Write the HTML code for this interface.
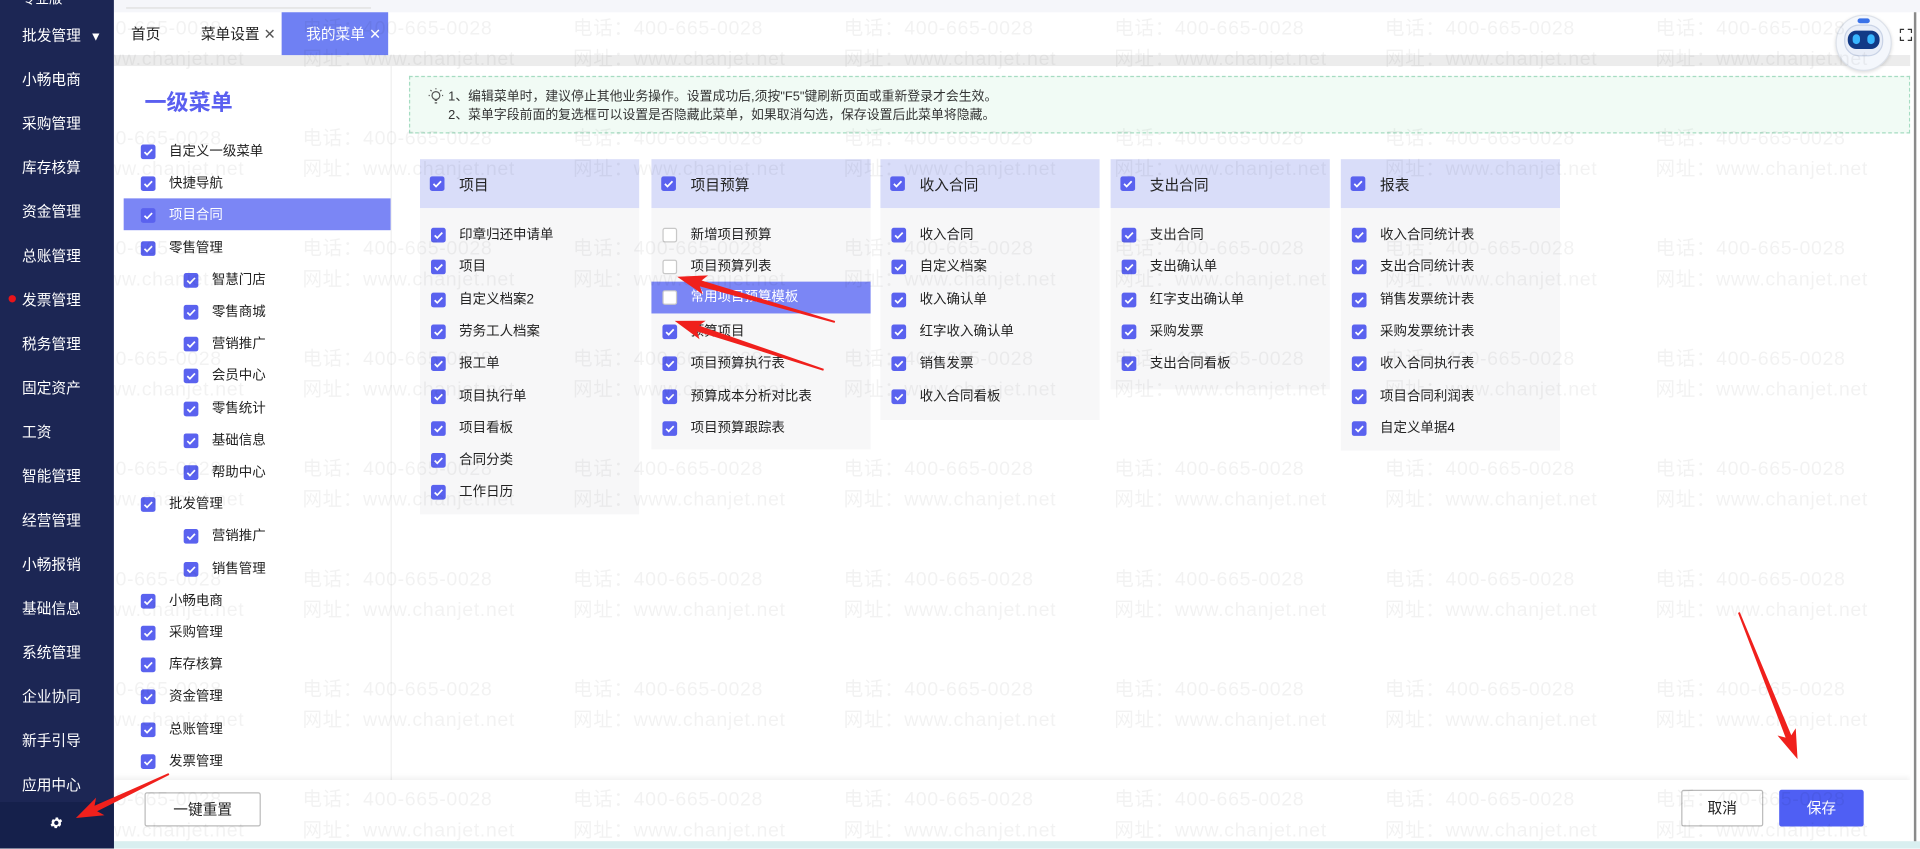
<!DOCTYPE html>
<html><head><meta charset="utf-8">
<style>
*{margin:0;padding:0;box-sizing:border-box}
html,body{width:1920px;height:848px;overflow:hidden;background:#fff}
body{font-family:"Liberation Sans","Noto Sans CJK SC",sans-serif;color:#222}
.stage{position:absolute;left:0;top:0;width:1568px;height:693px;transform:scale(1.22449);transform-origin:0 0;background:#f2f3f5;overflow:hidden}
.abs{position:absolute}
.side{left:0;top:0;width:93px;height:693px;background:#1c2654}
.side .it{position:absolute;left:18px;color:#fff;font-size:12px;line-height:16px;white-space:nowrap}
.cb{position:absolute;width:12px;height:12px;border-radius:2px;background:#5a62ef}
.cb svg{position:absolute;left:0;top:0}
.cb.off{background:#fff;border:1px solid #c8c8c8}
.row{position:absolute;font-size:11px;line-height:26px;white-space:nowrap;color:#222}
.row .cb{top:7px}
.col{position:absolute;top:130px;width:179px}
.col .hd{height:40px;background:#d9ddf9;position:relative;font-size:12px}
.col .bd{background:#f7f7f8;position:relative}
.wm{position:absolute;color:rgba(0,0,0,0.05);font-size:16px;white-space:nowrap;line-height:18px;letter-spacing:0.5px}
</style></head><body>
<div class="stage">
  <div class="abs" style="left:93px;top:0;width:1475px;height:10px;background:#f5f6fa"></div>
  <div class="abs" style="left:103px;top:6px;width:200px;height:1px;background:#ddd"></div>
  <div class="abs" style="left:93px;top:10px;width:1470px;height:35px;background:#fff"></div>
  <div class="abs" style="left:93px;top:45px;width:1470px;height:9px;background:#ececec"></div>
  <div class="abs" style="left:107px;top:20px;font-size:12px;line-height:16px;color:#222">首页</div>
  <div class="abs" style="left:164px;top:20px;font-size:12px;line-height:16px;color:#222">菜单设置 <span style="color:#555">✕</span></div>
  <div class="abs" style="left:230px;top:10px;width:87px;height:35px;background:#6f80f3"></div>
  <div class="abs" style="left:250px;top:20px;font-size:12px;line-height:16px;color:#fff">我的菜单 <span>✕</span></div>

  <div class="abs" style="left:93px;top:54px;width:1467px;height:633px;background:#fff"></div>
  <div class="abs" style="left:319px;top:54px;width:1px;height:583px;background:#efefef"></div>
  <div class="abs" style="left:118px;top:72px;font-size:18px;font-weight:bold;color:#5a5ff0;line-height:24px">一级菜单</div>

  <div class="abs" style="left:334px;top:62px;width:1226px;height:47px;background:#f1fbf5;border:1px dashed #a6dcc2"></div>
  <svg class="abs" style="left:350px;top:72px" width="12" height="14" viewBox="0 0 12 14"><circle cx="6" cy="6" r="3.2" fill="none" stroke="#555" stroke-width="1"/><path d="M5 10h2M5 12h2M6 1V0M1 6H0M12 6h-1M2.5 2.5l-1-1M9.5 2.5l1-1" stroke="#555" stroke-width="1"/></svg>
  <div class="abs" style="left:366px;top:72px;font-size:10.5px;line-height:15px;color:#333">1、编辑菜单时，建议停止其他业务操作。设置成功后,须按"F5"键刷新页面或重新登录才会生效。<br>2、菜单字段前面的复选框可以设置是否隐藏此菜单，如果取消勾选，保存设置后此菜单将隐藏。</div>

  <div class="abs" style="left:101px;top:162px;width:218px;height:26px;background:#7b86f5"></div>
  <div id="left"></div>
  <div id="cols"></div>

  <div class="abs" style="left:93px;top:637px;width:1467px;height:50px;background:#fff;box-shadow:0 -2px 4px rgba(0,0,0,0.06)"></div>
  <div class="abs" style="left:118px;top:647px;width:95px;height:28px;border:1px solid #bbb;border-radius:2px;font-size:12px;line-height:26px;text-align:center;color:#222">一键重置</div>
  <div class="abs" style="left:1373px;top:645px;width:67px;height:30px;border:1px solid #bbb;border-radius:2px;font-size:12px;line-height:28px;text-align:center;color:#222;background:#fff">取消</div>
  <div class="abs" style="left:1453px;top:645px;width:69px;height:30px;border-radius:2px;font-size:12px;line-height:30px;text-align:center;color:#fff;background:#4f5ff4">保存</div>
  <div class="abs" style="left:93px;top:687px;width:1475px;height:6px;background:#d9eff0"></div>
  <div class="abs" style="left:1560px;top:10px;width:8px;height:677px;background:#fff"></div>
  <div class="abs" style="left:1563px;top:10px;width:2px;height:677px;background:#8a8a8a"></div>

  <div class="abs" style="left:1499px;top:12px;width:46px;height:46px;border-radius:50%;background:#f4f7fc;border:1px solid #dde2ea;box-shadow:0 1px 3px rgba(0,0,0,0.15)"></div>
  <div class="abs" style="left:1506px;top:20px;width:32px;height:26px;border-radius:12px;background:#e9eef8;border:1px solid #c9d3e6"></div>
  <div class="abs" style="left:1509px;top:25px;width:26px;height:15px;border-radius:7px;background:#123a86"></div>
  <div class="abs" style="left:1513px;top:28px;width:6px;height:8px;border-radius:3px;background:#38b6ff"></div>
  <div class="abs" style="left:1525px;top:28px;width:6px;height:8px;border-radius:3px;background:#38b6ff"></div>
  <div class="abs" style="left:1517px;top:15px;width:10px;height:4px;border-radius:2px;background:#3a72e8"></div>
  <svg class="abs" style="left:1551px;top:23px" width="11" height="11" viewBox="0 0 11 11"><path d="M1 4V1h3M7 1h3v3M10 7v3H7M4 10H1V7" fill="none" stroke="#333" stroke-width="1"/></svg>

  <div class="abs side">
    <div class="it" style="top:-8px;font-size:11px">专业版</div>
    <div class="it" style="top:21px">批发管理 <span style="font-size:10px;margin-left:4px">▼</span></div>
    <div id="sideitems"></div>
    <div class="abs" style="left:0;top:655px;width:93px;height:38px;background:#15204b"></div>
    <svg class="abs" style="left:40px;top:666px" width="12" height="12" viewBox="0 0 24 24"><path fill="#fff" d="M19.4 13a7.5 7.5 0 0 0 0-2l2.1-1.6-2-3.5-2.5 1a7.6 7.6 0 0 0-1.7-1l-.4-2.6h-4l-.4 2.6a7.6 7.6 0 0 0-1.7 1l-2.5-1-2 3.5L4.6 11a7.5 7.5 0 0 0 0 2l-2.1 1.6 2 3.5 2.5-1a7.6 7.6 0 0 0 1.7 1l.4 2.6h4l.4-2.6a7.6 7.6 0 0 0 1.7-1l2.5 1 2-3.5zM12 15.5a3.5 3.5 0 1 1 0-7 3.5 3.5 0 0 1 0 7z"/></svg>
  </div>
  <div class="abs" style="left:7px;top:241px;width:6px;height:6px;border-radius:50%;background:#e8141a"></div>

  <div id="wm"></div>

  <svg class="abs" style="left:0;top:0" width="1568" height="693">
    <g fill="#f0201c">
      <polygon transform="translate(553,226) rotate(16)" points="0,0 24,-8 20,-2.5 134,-0.8 134,0.8 20,2.5 24,8"/>
      <polygon transform="translate(551,262) rotate(18.2)" points="0,0 24,-8 20,-2.5 128,-0.8 128,0.8 20,2.5 24,8"/>
      <polygon transform="translate(1468,620) rotate(-111.8)" points="0,0 24,-8 20,-2.5 129,-0.8 129,0.8 20,2.5 24,8"/>
      <polygon transform="translate(62,668) rotate(-25.3)" points="0,0 22,-8 18,-2.5 84,-0.8 84,0.8 18,2.5 22,8"/>
    </g>
  </svg>
</div>
<script>
var chk='<svg width="12" height="12" viewBox="0 0 12 12"><path d="M3 6.2l2.1 2.1L9.2 4" fill="none" stroke="#fff" stroke-width="1.4"/></svg>';
function cb(on){return '<span class="cb'+(on?'':' off')+'">'+(on?chk:'')+'</span>';}
var s=['小畅电商','采购管理','库存核算','资金管理','总账管理','发票管理','税务管理','固定资产','工资','智能管理','经营管理','小畅报销','基础信息','系统管理','企业协同','新手引导','应用中心'];
var h='';s.forEach(function(t,i){h+='<div class="it" style="top:'+(57+i*36)+'px">'+t+'</div>';});
document.getElementById('sideitems').innerHTML=h;
var L=[['自定义一级菜单',0],['快捷导航',0],['项目合同',0,1],['零售管理',0],['智慧门店',1],['零售商城',1],['营销推广',1],['会员中心',1],['零售统计',1],['基础信息',1],['帮助中心',1],['批发管理',0],['营销推广',1],['销售管理',1],['小畅电商',0],['采购管理',0],['库存核算',0],['资金管理',0],['总账管理',0],['发票管理',0]];
h='';L.forEach(function(r,i){var x=r[1]?150:115;var top=111+i*26.2;
h+='<div class="row" style="left:'+x+'px;top:'+top+'px;padding-left:23px;'+(r[2]?'color:#fff':'')+'">'+cb(1).replace('class="cb"','class="cb" style="left:0"')+r[0]+'</div>';});
document.getElementById('left').innerHTML=h;
var C=[[343,'项目',['印章归还申请单','项目','自定义档案2','劳务工人档案','报工单','项目执行单','项目看板','合同分类','工作日历'],250],
[532,'项目预算',['新增项目预算','项目预算列表','常用项目预算模板','预算项目','项目预算执行表','预算成本分析对比表','项目预算跟踪表'],197],
[719,'收入合同',['收入合同','自定义档案','收入确认单','红字收入确认单','销售发票','收入合同看板'],173],
[907,'支出合同',['支出合同','支出确认单','红字支出确认单','采购发票','支出合同看板'],148],
[1095,'报表',['收入合同统计表','支出合同统计表','销售发票统计表','采购发票统计表','收入合同执行表','项目合同利润表','自定义单据4'],198]];
h='';C.forEach(function(c,ci){
h+='<div class="col" style="left:'+c[0]+'px"><div class="hd"><span class="cb" style="left:8px;top:14px">'+chk+'</span><span style="position:absolute;left:32px;top:13px;line-height:16px">'+c[1]+'</span></div><div class="bd" style="height:'+c[3]+'px">';
c[2].forEach(function(t,i){var on=!(ci==1&&i<3);var hl=(ci==1&&i==2);
var top=hl?(7+i*26.3):(9+i*26.3);
h+='<div class="row" style="left:0;width:179px;top:'+top+'px;padding-left:32px;'+(hl?'background:#7b86f5;color:#fff;':'')+'">'+cb(on).replace('class="cb','style="left:9px" class="cb')+t+'</div>';});
h+='</div></div>';});
document.getElementById('cols').innerHTML=h;
h='';for(var r=0;r<8;r++){for(var k=0;k<7;k++){var x=26+k*221,y=15+r*90;
h+='<div class="wm" style="left:'+(x-93)+'px;top:'+y+'px">电话：400-665-0028</div><div class="wm" style="left:'+(x-93)+'px;top:'+(y+25)+'px">网址：www.chanjet.net</div>';}}
var w=document.getElementById('wm');w.innerHTML=h;w.style.cssText='position:absolute;left:93px;top:0;width:1475px;height:693px;overflow:hidden;pointer-events:none';
</script>
</body></html>
